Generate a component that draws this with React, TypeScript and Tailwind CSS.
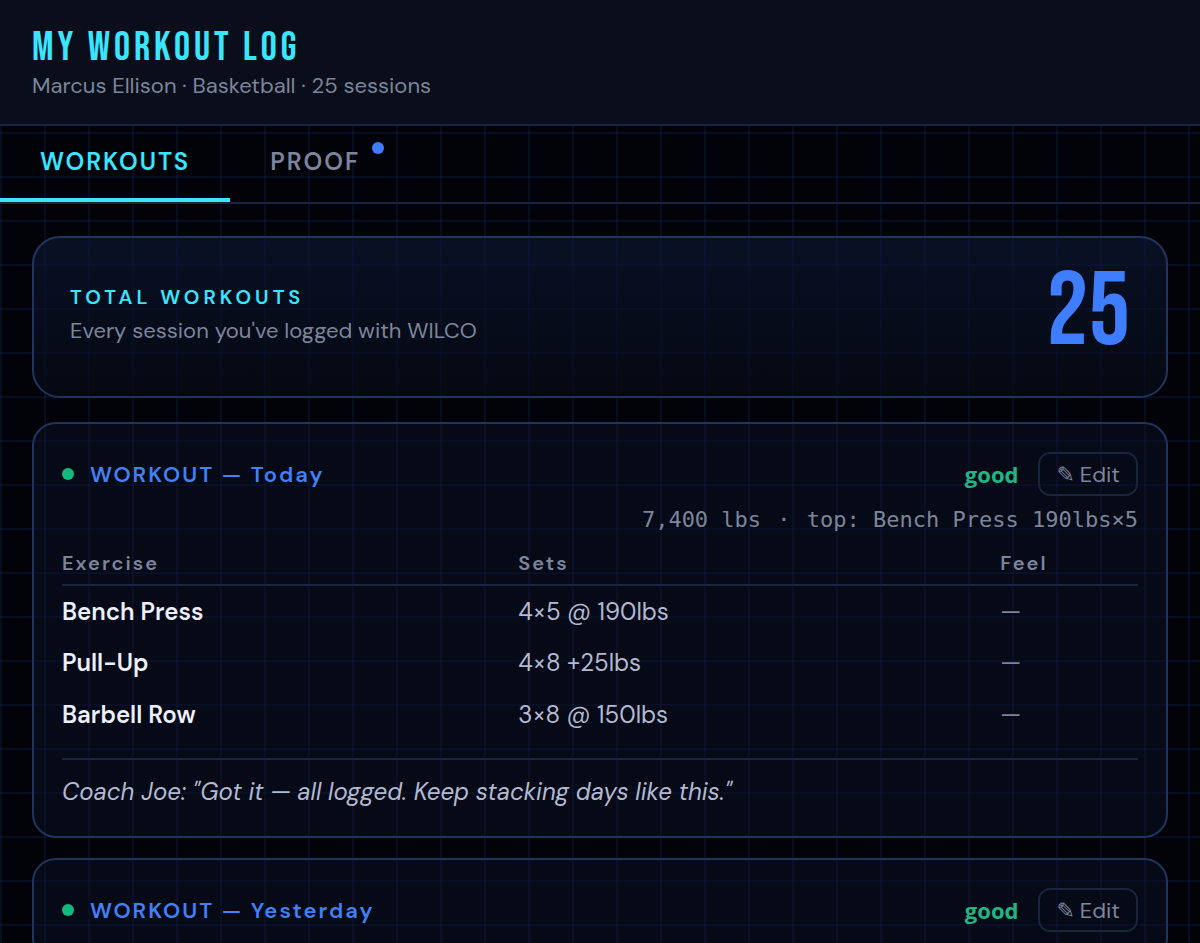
import { useState } from "react";
import { clsx } from "clsx";

interface Exercise {
  name: string;
  sets: string;
  feel: string;
}

interface Workout {
  id: string;
  day: string;
  rating: string;
  volume: string;
  top: string;
  exercises: Exercise[];
  note: string;
}

const workouts: Workout[] = [
  {
    id: "w25",
    day: "Today",
    rating: "good",
    volume: "7,400 lbs",
    top: "top: Bench Press 190lbs×5",
    exercises: [
      { name: "Bench Press", sets: "4×5 @ 190lbs", feel: "—" },
      { name: "Pull-Up", sets: "4×8 +25lbs", feel: "—" },
      { name: "Barbell Row", sets: "3×8 @ 150lbs", feel: "—" },
    ],
    note: 'Coach Joe: "Got it — all logged. Keep stacking days like this."',
  },
  {
    id: "w24",
    day: "Yesterday",
    rating: "good",
    volume: "",
    top: "",
    exercises: [],
    note: "",
  },
];

const tabs = [
  { id: "workouts", label: "WORKOUTS", unread: false },
  { id: "proof", label: "PROOF", unread: true },
];

function WorkoutCard({ workout }: { workout: Workout }) {
  return (
    <article className="rounded-3xl border-2 border-[#21345c] bg-[#0b1428]/45 p-7">
      <div className="flex items-center">
        <span className="size-3 rounded-full bg-[#12b981]" />
        <h2 className="ml-4 text-[22px] font-semibold tracking-[2px] text-[#4180f5]">
          WORKOUT — {workout.day}
        </h2>
        <span className="ml-auto font-['Open_Sans'] text-[22px] font-bold text-[#20b684]">{workout.rating}</span>
        <button className="ml-5 flex h-11 items-center gap-[5px] rounded-xl border-2 border-[#17233f] px-4 text-[22px] text-[#7d859c]">
          <span className="font-['DejaVu_Sans'] font-bold">✎</span>
          Edit
        </button>
      </div>

      {workout.volume && (
        <p className="mt-2 text-right font-['DejaVu_Sans_Mono',monospace] text-[22px] leading-8 text-[#7d859c]">
          {workout.volume} <span className="mx-[3px]">·</span> {workout.top}
        </p>
      )}

      {workout.exercises.length > 0 && (
        <table className="mt-[5px] w-full table-fixed text-left text-2xl">
          <thead>
            <tr className="h-11 border-b-2 border-[#17233f] text-xl tracking-[2px] text-[#7d859c]">
              <th className="w-[42.4%] font-semibold">Exercise</th>
              <th className="w-[44.8%] font-semibold">Sets</th>
              <th className="font-semibold">Feel</th>
            </tr>
          </thead>
          <tbody>
            {workout.exercises.map(ex => (
              <tr key={ex.name} className="h-13">
                <td className="font-semibold text-[#eceffc]">{ex.name}</td>
                <td className="text-[#b4b9d2]">{ex.sets}</td>
                <td className="text-[#7d859c]">{ex.feel}</td>
              </tr>
            ))}
          </tbody>
        </table>
      )}

      {workout.note && (
        <p className="mt-[17px] border-t-2 border-[#17233f] pt-4 text-2xl leading-8 text-[#b4b9d2] italic">
          {workout.note}
        </p>
      )}
    </article>
  );
}

export default function App() {
  const [active, setActive] = useState("workouts");

  return (
    <div className="h-screen overflow-hidden bg-[#020308] bg-[linear-gradient(to_right,#3b5bff1a_2px,transparent_2px),linear-gradient(to_bottom,#3b5bff1a_2px,transparent_2px)] bg-[size:44px_44px] font-['DM_Sans','Inter',sans-serif]">
      <header className="border-b-2 border-[#17233f] bg-[#090e1a] px-8 pt-6 pb-5">
        <h1 className="pt-1 font-['Bebas_Neue','Roboto',sans-serif] text-[40px] leading-10 tracking-[4px] text-[#3ae6ff]">
          MY WORKOUT LOG
        </h1>
        <p className="text-[22px] leading-9 text-[#7d859c]">Marcus Ellison · Basketball · 25 sessions</p>
      </header>

      <nav className="flex border-b-2 border-[#17233f]">
        {tabs.map(tab => (
          <button
            key={tab.id}
            onClick={() => setActive(tab.id)}
            className={clsx(
              "flex h-19 border-b-4 px-10 pt-4 text-2xl leading-10 font-semibold tracking-[2px]",
              active === tab.id ? "border-[#3ae6ff] text-[#3ae6ff]" : "border-transparent text-[#7d859c]",
            )}
          >
            {tab.label}
            {tab.unread && <span className="ml-3 size-3 rounded-full bg-[#3f7dff]" />}
          </button>
        ))}
      </nav>

      <main className="px-8 pt-8">
        <section className="flex items-center justify-between rounded-[28px] border-2 border-[#21345c] bg-linear-to-b from-[#0d1938]/60 to-[#070c18]/60 px-9 pt-6 pb-7">
          <div>
            <h2 className="text-xl leading-8 font-semibold tracking-[4px] text-[#3ae6ff]">TOTAL WORKOUTS</h2>
            <p className="text-[22px] leading-9 text-[#7d859c]">Every session you've logged with WILCO</p>
          </div>
          <span className="mb-1 font-['Bebas_Neue','Roboto',sans-serif] text-[104px] leading-[102px] text-[#3f7dff]">
            25
          </span>
        </section>

        <div className="mt-6 flex flex-col gap-5">
          {workouts.map(w => (
            <WorkoutCard key={w.id} workout={w} />
          ))}
        </div>
      </main>
    </div>
  );
}
